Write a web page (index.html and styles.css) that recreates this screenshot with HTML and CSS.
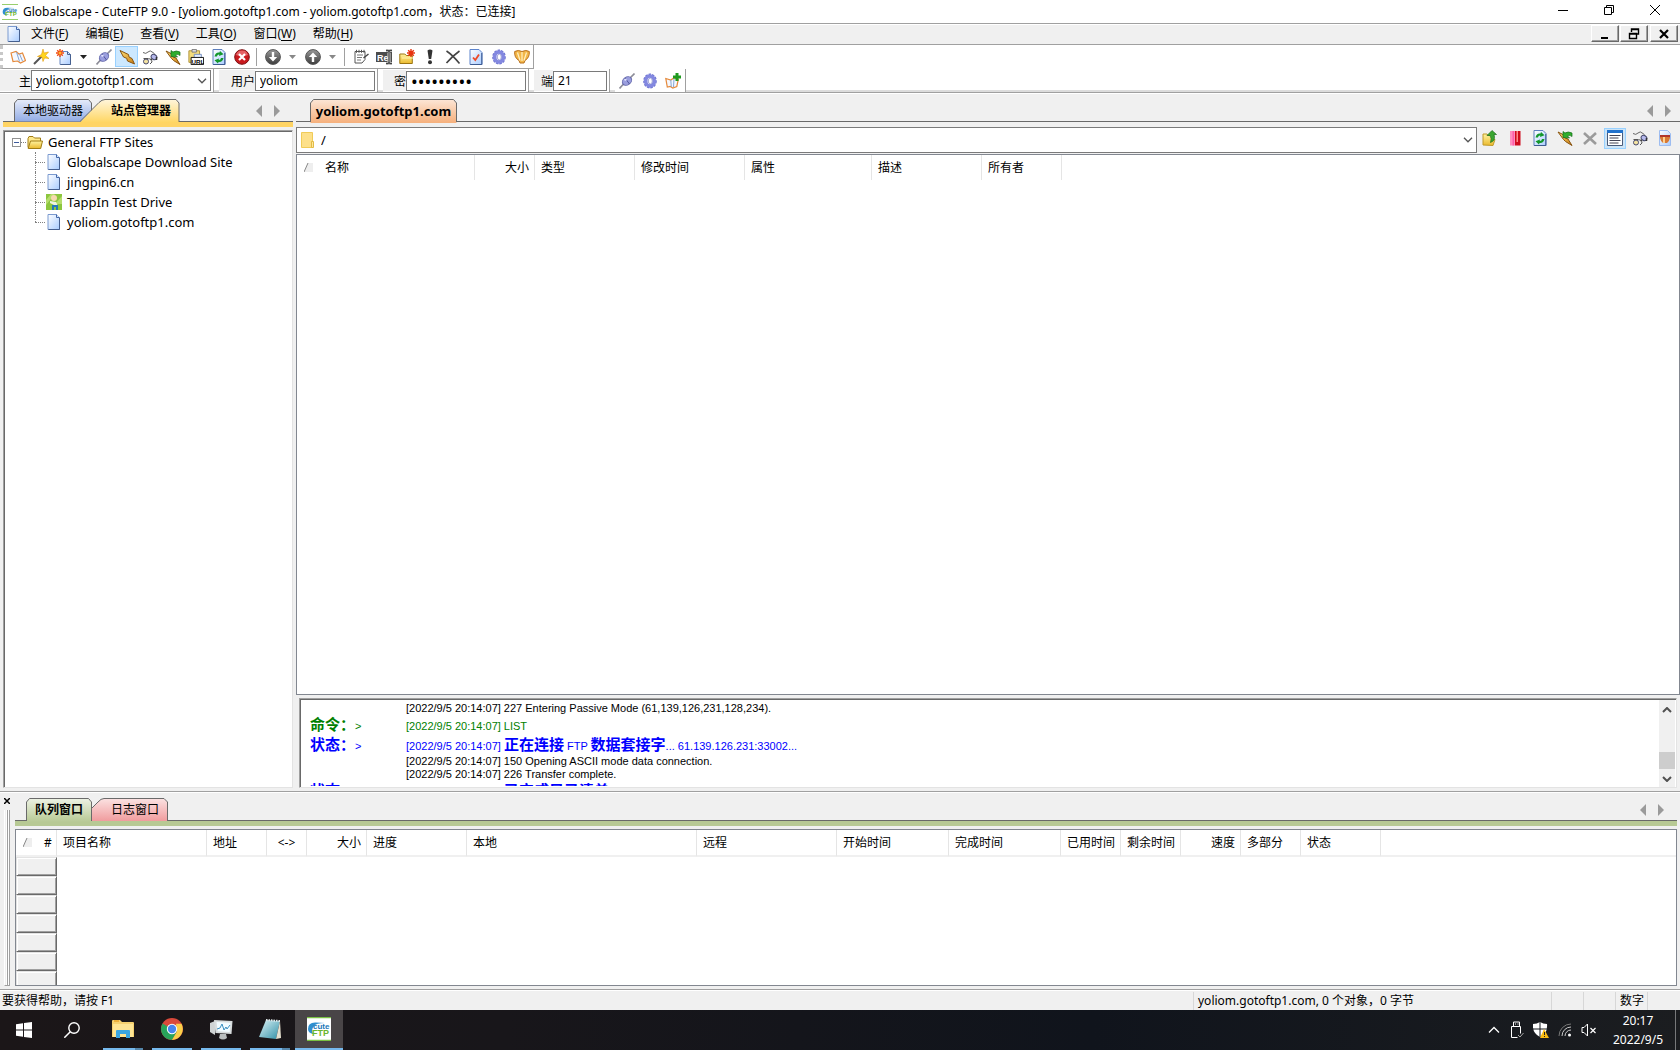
FILE: index.html
```html
<!DOCTYPE html>
<html lang="zh-CN">
<head>
<meta charset="utf-8">
<title>Globalscape - CuteFTP 9.0</title>
<link rel="stylesheet" href="styles.css">
</head>
<body>
<svg class="defs" width="0" height="0" aria-hidden="true">
  <defs>
    <linearGradient id="gDoc" x1="0" y1="0" x2="1" y2="1"><stop offset="0" stop-color="#fff"/><stop offset="1" stop-color="#a9ccff"/></linearGradient>
    <linearGradient id="gFolder" x1="0" y1="0" x2="0" y2="1"><stop offset="0" stop-color="#fff3a0"/><stop offset="1" stop-color="#eab92d"/></linearGradient>
    <linearGradient id="gBall" x1="0" y1="0" x2="0" y2="1"><stop offset="0" stop-color="#9a9a9a"/><stop offset="1" stop-color="#3c3c3c"/></linearGradient>
    <linearGradient id="gGold" x1="0" y1="0" x2="1" y2="1"><stop offset="0" stop-color="#ffe27a"/><stop offset="1" stop-color="#c87a10"/></linearGradient>
    <linearGradient id="gBlueTab" x1="0" y1="0" x2="0" y2="1"><stop offset="0" stop-color="#e6ecfa"/><stop offset="1" stop-color="#90aae4"/></linearGradient>
    <linearGradient id="gYellowTab" x1="0" y1="0" x2="0" y2="1"><stop offset="0" stop-color="#fff6dc"/><stop offset="1" stop-color="#ffd55f"/></linearGradient>
    <linearGradient id="gOrangeTab" x1="0" y1="0" x2="0" y2="1"><stop offset="0" stop-color="#fce6d6"/><stop offset="1" stop-color="#f6b07c"/></linearGradient>
    <linearGradient id="gGreenTab" x1="0" y1="0" x2="0" y2="1"><stop offset="0" stop-color="#edf2e4"/><stop offset="1" stop-color="#b7c994"/></linearGradient>
    <linearGradient id="gRedTab" x1="0" y1="0" x2="0" y2="1"><stop offset="0" stop-color="#fbe2e2"/><stop offset="1" stop-color="#f09c9e"/></linearGradient>
    <linearGradient id="gNote" x1="0" y1="0" x2="1" y2="1"><stop offset="0" stop-color="#dff5f8"/><stop offset="1" stop-color="#2f8fa6"/></linearGradient>
  </defs>
  <symbol id="doc" viewBox="0 0 16 16"><path d="M2 .5h8.500l3 3v12h-11.500z" fill="url(#gDoc)" stroke="#7b9ad0"/><path d="M10.500 .5v3h3" fill="#dceaff" stroke="#4468a8"/><path d="M13.500 4v11.500h-11" fill="none" stroke="#46608f"/></symbol>
  <symbol id="folder" viewBox="0 0 16 16"><path d="M1 13.500v-9l1-2h4l1.500 1.500h6v3" fill="#ffe98c" stroke="#a07c14"/><path d="M1.200 14.500l2.300-7.500h12l-1.800 7.500z" fill="url(#gFolder)" stroke="#a07c14"/></symbol>
  <symbol id="book" viewBox="0 0 16 16"><path d="M1 4l5-1.500 3 2.500 3.500-1 3 7.500-5 2.500-3-2-4.500.5z" fill="#f4f8ff" stroke="#e58a3c" stroke-width="1.200"/><path d="M6.500 3l3 9.500M9.500 5l3 7" stroke="#86a6d6" fill="none"/></symbol>
  <symbol id="wand" viewBox="0 0 16 16"><path d="M1 15l8-8" stroke="#555" stroke-width="2"/><path d="M10 0l1 4 4.500-1-3 3.500 3.500 3-4.500-.5-1.500 3.500-1-4.500-4.500-.5 4-2z" fill="#ffd51e" stroke="#e09a12" stroke-width=".6"/></symbol>
  <symbol id="newdoc" viewBox="0 0 16 16"><path d="M4 2.500h7.500l3 3v10h-10.500z" fill="url(#gDoc)" stroke="#6b8ac4"/><path d="M11.500 2.500v3h3v10h-10" fill="none" stroke="#46608f"/><path d="M4 0v8M0 4h8M1.200 1.200l5.600 5.600M6.800 1.200l-5.600 5.600" stroke="#f04a12" stroke-width="1.400"/><circle cx="4" cy="4" r="1.500" fill="#ffb52e"/></symbol>
  <symbol id="plug" viewBox="0 0 16 16"><path d="M.5 15.500l4.500-5M11 5l4.500-4.500" stroke="#8d8d98" stroke-width="1.600"/><ellipse cx="8" cy="8" rx="5" ry="3.800" transform="rotate(-35 8 8)" fill="#9a9ede" stroke="#6468ac"/><path d="M6 5l4.500 6" stroke="#5257a0"/><ellipse cx="6.500" cy="6.800" rx="1.300" ry="1" fill="#e2e4ff"/></symbol>
  <symbol id="bolt" viewBox="0 0 16 16"><path d="M1 1.500l8.500 4 .5 2.500 3 1.500 2.500 5.500-7-3-.8-2.700-3.200-1.300z" fill="url(#gGold)" stroke="#875310"/></symbol>
  <symbol id="plugs" viewBox="0 0 16 16"><path d="M1 3.500q3 2 5-.5t5 .5q2 1 2 3" fill="none" stroke="#666"/><ellipse cx="12" cy="8" rx="3" ry="2.400" transform="rotate(35 12 8)" fill="#b6b9ec" stroke="#45486e"/><path d="M14.500 8v3M10 10l-1.500 1" stroke="#333" stroke-width="1.500"/><circle cx="4" cy="12.500" r="2.500" fill="#f3e2a0" stroke="#45486e"/><path d="M1.500 9.500h5M6.500 10q3-1 3.500 3l-2 2" fill="none" stroke="#555"/></symbol>
  <symbol id="boltoff" viewBox="0 0 16 16"><path d="M1 2l5 2.500 2 3.500 3 1 4 6.500-6.500-4-2-2z" fill="url(#gGold)" stroke="#875310"/><path d="M6 7.500l0-6 2 1.500q3-2 7 0v3.500q-2-2-4.500-.5l2 2z" fill="#2fae2c" stroke="#146b18" stroke-width=".7"/></symbol>
  <symbol id="url" viewBox="0 0 18 18"><path d="M1 2h12v13h-12z" fill="#f4dc7c" stroke="#a98b2c"/><path d="M4.500 .5h5v3h-5z" fill="#ddd" stroke="#777"/><path d="M7 6h8v8h-8z" fill="#e3eeff" stroke="#6f8bc0"/><path d="M3.500 9.500h14v8h-14z" fill="#fff" stroke="#000"/><text x="4" y="16.500" font-size="7" font-weight="700" font-family="Liberation Sans, sans-serif">URL</text></symbol>
  <symbol id="refresh" viewBox="0 0 16 16"><path d="M2 .5h9l3 3v12h-12z" fill="url(#gDoc)" stroke="#5d7fbd"/><path d="M13.800 4v11.500h-11.500" fill="none" stroke="#3e5b90"/><path d="M3.500 7.500q1-4.500 5-4l.5-1.500 3.500 3.300-4.500 1.700.3-1.500q-2-.2-2.300 2zM12.500 9q-1 4.500-5 4l-.5 1.500-3.500-3.300 4.500-1.700-.3 1.500q2 .2 2.300-2z" fill="#13972b"/></symbol>
  <symbol id="stop" viewBox="0 0 16 16"><circle cx="8" cy="8" r="7.300" fill="#c91a1e" stroke="#7d1114"/><path d="M2 6a6.300 6.300 0 0 1 12 0q-6 2.500-12 0z" fill="#e56265"/><path d="M5 5l6 6M11 5l-6 6" stroke="#fff" stroke-width="2.200"/></symbol>
  <symbol id="down" viewBox="0 0 16 16"><circle cx="8" cy="8" r="7.400" fill="url(#gBall)" stroke="#555"/><path d="M6.800 3h2.400v5h3l-4.200 4.500-4.200-4.500h3z" fill="#fff"/></symbol>
  <symbol id="up" viewBox="0 0 16 16"><circle cx="8" cy="8" r="7.400" fill="url(#gBall)" stroke="#555"/><path d="M6.800 13h2.400v-5h3l-4.200-4.500-4.200 4.500h3z" fill="#fff"/></symbol>
  <symbol id="note" viewBox="0 0 16 16"><path d="M2 2.500h10v8l-3 3.500h-7z" fill="#fff" stroke="#555"/><path d="M3.500 .8v3M6 .8v3M8.500 .8v3M11 .8v3" stroke="#555"/><path d="M4 6h6M4 8.500h5M4 11h4" stroke="#777"/><path d="M15.500 5l-5 4" stroke="#444" stroke-width="1.500"/></symbol>
  <symbol id="rename" viewBox="0 0 16 16"><path d="M0 3h16v10h-16z" fill="#4c4c4c"/><text x="1" y="11.500" fill="#fff" font-size="9" font-weight="700" font-family="Liberation Sans, sans-serif">Re</text><path d="M10 1.500h2l1 1 1-1h2M13 2v12M10 14.500h2l1-1 1 1h2" fill="none" stroke="#ddd" stroke-width="3"/><path d="M10 1.500h2l1 1 1-1h2M13 2v12M10 14.500h2l1-1 1 1h2" fill="none" stroke="#444" stroke-width="1.300"/></symbol>
  <symbol id="newfolder" viewBox="0 0 16 16"><path d="M.8 14.500v-9.500h5l1.500 1.500h6v8z" fill="url(#gFolder)" stroke="#9b7512"/><path d="M3 9h11" stroke="#fff3b0"/><path d="M12 0v8M8 4h8M9.200 1.200l5.600 5.600M14.800 1.200l-5.600 5.600" stroke="#e8320e" stroke-width="1.400"/></symbol>
  <symbol id="bang" viewBox="0 0 16 16"><path d="M5.500 1.500q2.500-2 5 0l-1.300 8.500h-2.400z" fill="#333"/><circle cx="8" cy="13.300" r="2" fill="#333"/></symbol>
  <symbol id="cross" viewBox="0 0 16 16"><path d="M1.500 2q6 4 13 12.500M14.500 2q-7 5-13 12" fill="none" stroke="#444" stroke-width="1.600"/></symbol>
  <symbol id="crossgray" viewBox="0 0 16 16"><path d="M2 3l12 11M14 3l-12 11" stroke="#9b9b9b" stroke-width="2.600"/></symbol>
  <symbol id="check" viewBox="0 0 16 16"><path d="M2 .5h9l3 3v12h-12z" fill="url(#gDoc)" stroke="#5d84cc"/><path d="M13.800 4v11.500h-11.500" fill="none" stroke="#3e5b90"/><path d="M5 8.500l2.300 2.500 3.700-5.500" fill="none" stroke="#ee4a28" stroke-width="1.800"/></symbol>
  <symbol id="gear" viewBox="0 0 16 16"><ellipse cx="8" cy="8" rx="5.500" ry="6.200" fill="none" stroke="#6c72cf" stroke-width="2.600" stroke-dasharray="2.200 1"/><ellipse cx="8" cy="8" rx="4.300" ry="5" fill="none" stroke="#8388e0" stroke-width="3.600"/><ellipse cx="8.300" cy="8" rx="2" ry="3" fill="#fff" stroke="#666bbd" stroke-width=".6"/></symbol>
  <symbol id="shell" viewBox="0 0 16 16"><path d="M.7 2.500q3.500-2 7.300 0 4-2 7.300 0 .5 6-4.300 9l-1 2.500h-4l-1-2.500q-5-3-4.300-9z" fill="#f3b748" stroke="#b9701d"/><path d="M3.500 3.500l2.500 8M8 3v9M12.500 3.500l-2.500 8" stroke="#fff0c4" stroke-width="1.200"/></symbol>
  <symbol id="bookadd" viewBox="0 0 16 16"><path d="M.8 5.500l5 1.500 3-2 4.500 1.500-1.500 7-4 1.500-2.500-1.500-3 .5z" fill="#f4f8ff" stroke="#e58a3c" stroke-width="1.200"/><path d="M5.800 7l.5 7M9 6l-.5 8" stroke="#86a6d6"/><path d="M12 0v8M8 4h8" stroke="#1f9a1f" stroke-width="3"/></symbol>
  <symbol id="folderup" viewBox="0 0 16 16"><path d="M1 15v-11h4l1 1.500h4v4h3l-2 6z" fill="url(#gFolder)" stroke="#c09a2a"/><path d="M5 5.500l5-5 4.500 4h-2.500q2 6-3.500 8 1.500-4-.5-7z" fill="#3aa630" stroke="#1c6e1b" stroke-width=".7"/></symbol>
  <symbol id="redbook" viewBox="0 0 16 16"><path d="M3 1h4.500v14.500h-4.500z" fill="#ff8fc0"/><path d="M5.500 1h2v14.500h-2z" fill="#ff5ca8"/><path d="M8 1h5.500v14.500h-5.500z" fill="#cf0b1d"/><path d="M9.500 1h1.500v11h-1.500z" fill="#ff8a8a"/></symbol>
  <symbol id="listview" viewBox="0 0 16 16"><path d="M.5 .5h15v15h-15z" fill="#fff" stroke="#4a5a78"/><path d="M0 0h16v3h-16z" fill="#2272cc"/><path d="M2.500 5.500h11M2.500 8h9M2.500 10.500h11M2.500 13h9" stroke="#445"/></symbol>
  <symbol id="shelldoc" viewBox="0 0 16 16"><path d="M2.500 .5h8l3 3v12h-11z" fill="url(#gDoc)" stroke="#9dbcf0"/><path d="M3 5h10v3q-1 4-3 5h-4q-2-1-3-5z" fill="#d77a35"/><path d="M3 6h10" stroke="#b1362b" stroke-width="2"/><path d="M7 7v6" stroke="#ffd292" stroke-width="2"/></symbol>
  <symbol id="tappin" viewBox="0 0 16 16"><path d="M0 0h16v16h-16z" fill="#8cc63e"/><path d="M0 6l5-6h4l-9 11M16 2l-7 8h7" fill="#b5dd6c"/><circle cx="8" cy="4" r="3" fill="#f6d9b0"/><path d="M4 7l6 1 2 4-4-1-4-2z" fill="#eef3e0"/><path d="M6 16v-5h6v5h-2v-3h-2v3z" fill="#2377b9"/></symbol>
  <symbol id="cute" viewBox="0 0 24 24"><path d="M0 0h24v24h-24z" fill="#fff"/><path d="M0 .5h24M0 23.500h24" stroke="#7ac143" stroke-width="1.400"/><path d="M1 12q0-7 8-6.500l9 .5q-9 0-11 3-3 3-1 8-5-1-5-5z" fill="#2f8fd0"/><text x="6" y="12" fill="#1b77b8" font-size="8" font-weight="700" font-family="Liberation Sans, sans-serif">cute</text><text x="5" y="18.500" fill="#6cb52d" font-size="9" font-weight="700" font-family="Liberation Sans, sans-serif">FTP</text></symbol>
  <symbol id="drop" viewBox="0 0 8 4"><path d="M0 0h7l-3.500 4z" fill="currentColor"/></symbol>
  <symbol id="chev" viewBox="0 0 10 6"><path d="M1 .8l4 4 4-4" fill="none" stroke="#555" stroke-width="1.300"/></symbol>
  <symbol id="tril" viewBox="0 0 6 12"><path d="M6 0v12l-6-6z" fill="#9a9a9a"/></symbol>
  <symbol id="trir" viewBox="0 0 6 12"><path d="M0 0v12l6-6z" fill="#9a9a9a"/></symbol>
  <symbol id="sort" viewBox="0 0 9 9"><path d="M4 0h5v9h-9z" fill="#eee"/><path d="M0 9l4-9" stroke="#888"/></symbol>
</svg>

<header class="titlebar">
  <svg class="i16 appicon"><use href="#cute"/></svg>
  <h1>Globalscape - CuteFTP 9.0 - [yoliom.gotoftp1.com - yoliom.gotoftp1.com，状态：已连接]</h1>
  <button class="win" aria-label="最小化"><svg width="10" height="10"><path d="M0 5.500h10" stroke="#000"/></svg></button>
  <button class="win" aria-label="还原"><svg width="10" height="10"><path d="M.5 2.500h7v7h-7zM2.500 2.500v-2h7v7h-2" fill="none" stroke="#000"/></svg></button>
  <button class="win" aria-label="关闭"><svg width="10" height="10"><path d="M0 0l10 10M10 0l-10 10" stroke="#000"/></svg></button>
</header>

<nav class="menubar">
  <svg class="i16"><use href="#doc"/></svg>
  <div class="menus">
    <button>文件(<u>F</u>)</button><button>编辑(<u>E</u>)</button><button>查看(<u>V</u>)</button><button>工具(<u>O</u>)</button><button>窗口(<u>W</u>)</button><button>帮助(<u>H</u>)</button>
  </div>
  <div class="mdi">
    <button aria-label="最小化文档"><svg width="12" height="12"><path d="M2 10h7" stroke="#000" stroke-width="2"/></svg></button>
    <button aria-label="还原文档"><svg width="12" height="12"><path d="M3.500 4v-3h7v5h-2M3 1.500h8M1.500 5.500h7v5h-7zM1 6h8" fill="none" stroke="#000" stroke-width="1.400"/></svg></button>
    <button aria-label="关闭文档"><svg width="12" height="12"><path d="M2 2l8 8M10 2l-8 8" stroke="#000" stroke-width="2.200"/></svg></button>
  </div>
</nav>

<div class="toolbar">
  <div class="tools">
    <button aria-label="站点管理器"><svg class="i16"><use href="#book"/></svg></button>
    <button aria-label="连接向导"><svg class="i16"><use href="#wand"/></svg></button>
    <button aria-label="新建"><svg class="i16"><use href="#newdoc"/></svg></button>
    <button class="dd dark" aria-label="新建选项"><svg><use href="#drop"/></svg></button>
    <button aria-label="连接"><svg class="i16"><use href="#plug"/></svg></button>
    <button class="on" aria-label="快速连接"><svg class="i16"><use href="#bolt"/></svg></button>
    <button aria-label="重新连接"><svg class="i16"><use href="#plugs"/></svg></button>
    <button aria-label="断开"><svg class="i16"><use href="#boltoff"/></svg></button>
    <button aria-label="粘贴 URL"><svg class="i16"><use href="#url"/></svg></button>
    <button aria-label="刷新"><svg class="i16"><use href="#refresh"/></svg></button>
    <button aria-label="停止"><svg class="i16"><use href="#stop"/></svg></button>
    <i class="sep"></i>
    <button aria-label="下载"><svg class="i16"><use href="#down"/></svg></button>
    <button class="dd" aria-label="下载选项"><svg><use href="#drop"/></svg></button>
    <button aria-label="上传"><svg class="i16"><use href="#up"/></svg></button>
    <button class="dd" aria-label="上传选项"><svg><use href="#drop"/></svg></button>
    <i class="sep"></i>
    <button aria-label="编辑"><svg class="i16"><use href="#note"/></svg></button>
    <button aria-label="重命名"><svg class="i16"><use href="#rename"/></svg></button>
    <button aria-label="新建文件夹"><svg class="i16"><use href="#newfolder"/></svg></button>
    <button aria-label="执行"><svg class="i16"><use href="#bang"/></svg></button>
    <button aria-label="删除"><svg class="i16"><use href="#cross"/></svg></button>
    <button aria-label="属性"><svg class="i16"><use href="#check"/></svg></button>
    <button aria-label="设置"><svg class="i16"><use href="#gear"/></svg></button>
    <button aria-label="帮助"><svg class="i16"><use href="#shell"/></svg></button>
  </div>
</div>

<form class="connect">
  <div class="group"><label class="w-host" for="host">主</label><span class="combo host"><select id="host"><option>yoliom.gotoftp1.com</option></select><svg><use href="#chev"/></svg></span></div>
  <div class="group"><label class="w-user" for="user">用户</label><input id="user" class="wide" value="yoliom"></div>
  <div class="group"><label class="w-pass" for="pass">密</label><input id="pass" class="wide" type="password" value="•••••••••"></div>
  <div class="group"><label class="w-port" for="port">端</label><input id="port" class="narrow" value="21"></div>
  <div class="group last">
    <button type="button" aria-label="连接"><svg class="i16"><use href="#plug"/></svg></button>
    <button type="button" aria-label="设置"><svg class="i16"><use href="#gear"/></svg></button>
    <button type="button" aria-label="添加到站点管理器"><svg class="i16"><use href="#bookadd"/></svg></button>
  </div>
</form>

<main class="work">
  <aside class="sites">
    <div class="tabs yellow">
      <button class="tab t-local"><svg width="78" height="23"><path d="M.5 23v-19l3-3.500h71l3 3.500v19z" fill="url(#gBlueTab)" stroke="#6a6a6a"/></svg><span>本地驱动器</span></button>
      <button class="tab t-site"><svg width="100" height="24"><path d="M0 23.500l19-20q3-3 6-3h71l3 3.500v20z" fill="url(#gYellowTab)"/><path d="M0 22.500l19-19q3-3 6-3h71l3 3.500v19" fill="none" stroke="#6a6a6a"/></svg><b>站点管理器</b></button>
      <span class="scrollers"><button aria-label="向左"><svg><use href="#tril"/></svg></button><button aria-label="向右"><svg><use href="#trir"/></svg></button></span>
    </div>
    <div class="treebox">
      <div class="root"><i class="minus"></i><i class="dots"></i><svg class="i16"><use href="#folder"/></svg><span>General FTP Sites</span></div>
      <ul class="tree">
        <li><svg class="i16"><use href="#doc"/></svg><span>Globalscape Download Site</span></li>
        <li><svg class="i16"><use href="#doc"/></svg><span>jingpin6.cn</span></li>
        <li><svg class="i16"><use href="#tappin"/></svg><span>TappIn Test Drive</span></li>
        <li><svg class="i16"><use href="#doc"/></svg><span>yoliom.gotoftp1.com</span></li>
      </ul>
    </div>
  </aside>

  <section class="remote">
    <div class="tabs plain">
      <button class="tab t-remote"><svg width="147" height="24"><path d="M.5 24v-20l3-3.500h140l3 3.500v20z" fill="url(#gOrangeTab)"/><path d="M.5 23v-19l3-3.500h140l3 3.500v19" fill="none" stroke="#6a6a6a"/></svg><b>yoliom.gotoftp1.com</b></button>
      <span class="scrollers"><button aria-label="向左"><svg><use href="#tril"/></svg></button><button aria-label="向右"><svg><use href="#trir"/></svg></button></span>
    </div>
    <div class="pathrow">
      <span class="combo path"><svg class="pf" viewBox="0 0 14 17"><path d="M.5 .5h11v15h-11z" fill="#fde08a" stroke="#f0cb58"/><path d="M10.500 9.500h2v6h-2z" fill="#ffe99c" stroke="#e3bb45"/></svg><select aria-label="远程路径"><option>/</option></select><svg><use href="#chev"/></svg></span>
      <div class="ptools">
        <button aria-label="上级目录"><svg class="i16"><use href="#folderup"/></svg></button>
        <button aria-label="书签"><svg class="i16"><use href="#redbook"/></svg></button>
        <button aria-label="刷新"><svg class="i16"><use href="#refresh"/></svg></button>
        <button aria-label="断开"><svg class="i16"><use href="#boltoff"/></svg></button>
        <button aria-label="取消"><svg class="i16"><use href="#crossgray"/></svg></button>
        <button class="on" aria-label="显示日志"><svg class="i16"><use href="#listview"/></svg></button>
        <button aria-label="重新连接"><svg class="i16"><use href="#plugs"/></svg></button>
        <button aria-label="属性"><svg class="i16"><use href="#shelldoc"/></svg></button>
      </div>
    </div>
    <div class="files">
      <table>
        <colgroup><col class="c178"><col class="c60"><col class="c100"><col class="c110"><col class="c127"><col class="c110"><col class="c80"><col></colgroup>
        <thead><tr><th><svg class="sort"><use href="#sort"/></svg>名称</th><th class="r">大小</th><th>类型</th><th>修改时间</th><th>属性</th><th>描述</th><th>所有者</th><th class="end"></th></tr></thead>
      </table>
    </div>
    <div class="log">
      <div class="lines">
        <p><span></span>[2022/9/5 20:14:07] 227 Entering Passive Mode (61,139,126,231,128,234).</p>
        <p class="cmd"><span><b>命令：</b>&gt;</span>[2022/9/5 20:14:07] LIST</p>
        <p class="stat"><span><b>状态：</b>&gt;</span>[2022/9/5 20:14:07] <b>正在连接</b> FTP <b>数据套接字</b>... 61.139.126.231:33002...</p>
        <p><span></span>[2022/9/5 20:14:07] 150 Opening ASCII mode data connection.</p>
        <p><span></span>[2022/9/5 20:14:07] 226 Transfer complete.</p>
        <p class="stat"><span><b>状态：</b>&gt;</span>[2022/9/5 20:14:07] <b>已完成目录清单</b></p>
      </div>
      <div class="vscroll"><svg class="flip" viewBox="0 0 10 6"><path d="M1 1l4 4 4-4" fill="none" stroke="#505050" stroke-width="2"/></svg><i class="thumb"></i><svg viewBox="0 0 10 6"><path d="M1 1l4 4 4-4" fill="none" stroke="#505050" stroke-width="2"/></svg></div>
    </div>
  </section>
</main>

<section class="dock">
  <div class="grip"><button aria-label="关闭窗格"><svg width="6" height="6"><path d="M0 0l6 6M6 0l-6 6" stroke="#000" stroke-width="1.500"/></svg></button><i></i></div>
  <div class="dockbody">
    <div class="tabs green">
      <button class="tab t-queue"><svg width="66" height="24"><path d="M.5 24v-20l3-3.500h59l3 3.500v20z" fill="url(#gGreenTab)"/><path d="M.5 23v-19l3-3.500h59l3 3.500v19" fill="none" stroke="#6a6a6a"/></svg><b>队列窗口</b></button>
      <button class="tab t-logs"><svg width="76" height="23"><path d="M0 23v-13l6-6q3-3.500 6-3.500h60l3.500 3.500v19z" fill="url(#gRedTab)"/><path d="M0 10l6-6q3-3.500 6-3.500h60l3.500 3.500v19" fill="none" stroke="#6a6a6a"/></svg><span>日志窗口</span></button>
      <span class="scrollers"><button aria-label="向左"><svg><use href="#tril"/></svg></button><button aria-label="向右"><svg><use href="#trir"/></svg></button></span>
    </div>
    <div class="queue">
      <table>
        <colgroup><col class="c41"><col class="c150"><col class="c60"><col class="c40"><col class="c60"><col class="c100"><col class="c230"><col class="c140"><col class="c112"><col class="c112"><col class="c60"><col class="c60"><col class="c60"><col class="c60"><col class="c80"><col></colgroup>
        <thead><tr><th class="num"><svg class="sort"><use href="#sort"/></svg>#</th><th>项目名称</th><th>地址</th><th class="dir">&lt;-&gt;</th><th class="r">大小</th><th>进度</th><th>本地</th><th>远程</th><th>开始时间</th><th>完成时间</th><th>已用时间</th><th>剩余时间</th><th class="r">速度</th><th>多部分</th><th>状态</th><th class="end"></th></tr></thead>
        <tbody><tr><td></td></tr><tr><td></td></tr><tr><td></td></tr><tr><td></td></tr><tr><td></td></tr><tr><td></td></tr><tr><td></td></tr></tbody>
      </table>
    </div>
  </div>
</section>

<footer class="status"><span class="msg">要获得帮助，请按 F1</span><span class="conn">yoliom.gotoftp1.com, 0 个对象，0 字节</span><span class="cell"></span><span class="cell"></span><span class="cell">数字</span><span class="cell"></span></footer>

<div class="taskbar">
  <button class="tb" aria-label="开始"><svg width="16" height="16"><path d="M0 2.200l7-1v6.300h-7zM8 1l8-1v7.500h-8zM0 8.500h7v6.300l-7-1zM8 8.500h8v7.500l-8-1z" fill="#fff"/></svg></button>
  <button class="tb" aria-label="搜索"><svg width="16" height="16"><circle cx="10" cy="6" r="5.200" fill="none" stroke="#fff" stroke-width="1.400"/><path d="M6.300 9.700l-6 6" stroke="#fff" stroke-width="1.500"/></svg></button>
  <button class="tb run multi" aria-label="文件资源管理器"><svg width="22" height="20"><path d="M0 2q0-1 1-1h7l2 2h11q1 0 1 1v14h-22z" fill="#f6d170"/><path d="M1 5h20v13h-20z" fill="#ffe594"/><path d="M2 2h5" stroke="#e9a52d" stroke-width="1.500"/><path d="M4 19v-7q0-1 1-1h12q1 0 1 1v7h-4v-4h-6v4z" fill="#3ba6e2"/></svg></button>
  <button class="tb run" aria-label="Chrome"><svg width="22" height="22" viewBox="0 0 22 22"><circle cx="11" cy="11" r="11" fill="#d9493b"/><path d="M1.500 5.500a11 11 0 0 0 9.500 16.500l5-8.500-5-2.500z" fill="#28a45a"/><path d="M20.500 5.800a11 11 0 0 1-9.500 16.200l5-8.500-1-7.700z" fill="#f9cf4a"/><circle cx="11" cy="11" r="5.200" fill="#fff"/><circle cx="11" cy="11" r="4.200" fill="#4785ee"/></svg></button>
  <button class="tb run" aria-label="监视器"><svg width="23" height="21" viewBox="0 0 23 21"><path d="M0 4l5-2v14l-5-3z" fill="#cfd3d4"/><path d="M4 1l18.500 1-1 13-16-1z" fill="#d8dcdd"/><path d="M6.500 3l14 .7-.8 9.300-12-.8z" fill="#f2fbff"/><path d="M7 10l3-1 2-4 2 6 2-3 1 2 3-4" fill="none" stroke="#3a8fc0"/><path d="M10 15h6l1 4q-4 3-8 0z" fill="#b9bdbe"/></svg></button>
  <button class="tb run multi" aria-label="记事本"><svg width="22" height="21" viewBox="0 0 22 21"><path d="M7 1l14 1-4 18-17-2z" fill="url(#gNote)"/><path d="M21 2l1 17-5 1z" fill="#e4e0cf"/><path d="M7 1l14 1" stroke="#dfe9ea" stroke-width="2" stroke-dasharray="1.500 1"/></svg></button>
  <button class="tb run active" aria-label="CuteFTP"><svg width="24" height="24"><use href="#cute"/></svg></button>
  <div class="tray">
    <svg width="14" height="16"><path d="M2 10.500l5-5 5 5" fill="none" stroke="#fff" stroke-width="1.300"/></svg>
    <svg width="14" height="18"><path d="M3.500 5.500v-4.500h6v4.500M1.500 5.500h9v7M1.500 5.500v11h6" fill="none" stroke="#fff"/><path d="M5 3h1M7.500 3h1" stroke="#fff"/><path d="M8 14l2 2 3.500-4" fill="none" stroke="#aaa"/></svg>
    <svg width="16" height="17"><path d="M7 0q3 2 7 2 1 9-7 13-8-4-7-13 4 0 7-2z" fill="#fff"/><path d="M7 0v15M0 7h14" stroke="#15181e"/><path d="M11 7l5 9h-9z" fill="#fbbc12"/><path d="M11.500 10v3M11.500 14v1" stroke="#222"/></svg>
    <svg width="14" height="14"><path d="M1 13a12 12 0 0 1 12-12" fill="none" stroke="#777"/><path d="M4 13a9 9 0 0 1 9-9M7 13a6 6 0 0 1 6-6" fill="none" stroke="#ccc"/><circle cx="11.500" cy="12" r="1.500" fill="#fff"/></svg>
    <svg width="16" height="14"><path d="M1 4.500h2l3.500-3.500v12l-3.500-3.500h-2z" fill="none" stroke="#fff"/><path d="M9.500 5l5 5M14.500 5l-5 5" stroke="#fff" stroke-width="1.200"/></svg>
  </div>
  <div class="clock"><time>20:17</time><time>2022/9/5</time></div>
  <button class="desk" aria-label="显示桌面"></button>
</div>
</body>
</html>
```
FILE: styles.css
```css
* { box-sizing: border-box; }
html, body { height: 100%; }
body {
  margin: 0;
  display: flex;
  flex-direction: column;
  background: #f0f0f0;
  color: #000;
  font: 12px/16px "Noto Sans", "Noto Sans CJK SC", sans-serif;
  overflow: hidden;
  white-space: nowrap;
}
button, input, select { font: inherit; color: inherit; margin: 0; padding: 0; border: 0; background: none; border-radius: 0; }
button { display: flex; align-items: center; justify-content: center; flex: none; }
svg { display: block; flex: none; }
.defs { position: absolute; }
.i16 { width: 16px; height: 16px; }

.titlebar { flex: none; height: 24px; display: flex; align-items: center; background: #fff; border-bottom: 1px solid #a0a0a0; padding: 0 2px; }
.titlebar h1 { margin: 0 0 0 5px; flex: 1; font-size: 12px; font-weight: 400; }
.win { width: 46px; height: 20px; align-self: flex-start; }

.menubar { flex: none; height: 21px; display: flex; align-items: center; border-top: 1px solid #fff; border-bottom: 1px solid #a0a0a0; padding: 0 2px 2px 6px; }
.menus { display: flex; flex: 1; gap: 1px; }
.menus button { padding: 0 8px; }
.menus u { text-underline-offset: 2px; }
.menubar > .i16 { margin-right: 1px; }
.mdi { display: flex; gap: 1px; }
.mdi button { width: 28px; height: 17px; background: #f0f0f0; border: 1px solid; border-color: #fff #696969 #696969 #fff; box-shadow: inset -1px -1px #a0a0a0; }
.mdi button:last-child { margin-left: 1px; }

.toolbar { flex: none; height: 24px; display: flex; background: #fff; }
.tools { display: flex; align-items: center; height: 24px; padding-left: 3px; border-left: 3px dotted #c8c8c8; border-right: 1px solid #a0a0a0; border-bottom: 1px solid #a0a0a0; }
.tools button { width: 23px; height: 21px; }
.tools .dd { width: 17px; color: #888; }
.tools .dark { color: #222; }
.dd svg { width: 8px; height: 4px; }
.tools .on, .ptools .on { background: #cce8ff; border: 1px solid #99d1ff; }
.sep { width: 8px; height: 18px; border-left: 1px solid #a0a0a0; margin-left: 3px; margin-right: -3px; }

.connect { flex: none; height: 24px; margin: 0; display: flex; align-items: flex-start; background: #fff; border-bottom: 1px solid #a0a0a0; box-shadow: inset 0 -2px #dcdcdc; }
.group { display: flex; align-items: center; height: 23px; border-right: 1px solid #a0a0a0; padding-right: 2px; margin-right: 5px; background: #fff; }
.group label { background: #f0f0f0; text-align: right; height: 21px; line-height: 24px; overflow: hidden; }
.w-host { width: 31px; }
.w-user { width: 36px; }
.w-pass { width: 23px; }
.w-port { width: 19px; }
.group input { height: 20px; border: 1px solid #7a7a7a; padding: 0 4px; background: #fff; }
.group .wide { width: 120px; }
.group input[type="password"] { font-size: 18px; }
.group .narrow { width: 54px; }
.combo { display: flex; align-items: center; border: 1px solid #7a7a7a; background: #fff; }
.combo select { appearance: none; flex: 1; min-width: 0; outline: 0; }
.combo svg:last-child { width: 10px; height: 6px; margin-right: 3px; }
.host { width: 180px; height: 21px; padding-left: 4px; }
.last { padding: 0 1px 0 0; }
.last button { width: 23px; height: 22px; }

.work { flex: 1; min-height: 0; display: flex; padding: 5px 0 3px 3px; border-top: 1px solid #fff; border-bottom: 1px solid #a0a0a0; }
.sites { width: 290px; flex: none; display: flex; flex-direction: column; margin-right: 3px; }
.tabs { flex: none; display: flex; height: 23px; position: relative; box-shadow: inset 0 -1px #696969; }
.tab { position: relative; height: 23px; }
.tab svg { position: absolute; left: 0; top: 0; }
.tab span, .tab b { position: relative; }
.tabs.yellow { height: 28px; border-bottom: 5px solid #ffd464; padding-left: 11px; }
.t-local { width: 78px; }
.t-site { width: 100px; margin-left: -12px; padding-left: 31px; justify-content: flex-start; }
.scrollers { margin-left: auto; display: flex; align-items: center; gap: 12px; padding-right: 13px; }
.plain .scrollers { padding-right: 9px; }
.scrollers svg { width: 6px; height: 12px; }
.treebox { flex: 1; background: #fff; margin-top: 3px; border: 1px solid #a0a0a0; border-right-color: #e3e3e3; border-bottom-color: #e3e3e3; box-shadow: inset 1px 1px #696969; font-size: 13px; }
.root { display: flex; align-items: center; height: 20px; margin-top: 1px; padding-left: 8px; }
.root span, .tree span { padding-left: 5px; }
.root .i16 { margin-left: 1px; }
.minus { width: 9px; height: 9px; border: 1px solid #919191; background: linear-gradient(#3c5a9c, #3c5a9c) center / 5px 1px no-repeat #fff; }
.dots { width: 5px; border-top: 1px dotted #808080; }
.tree { list-style: none; margin: 0; padding: 0 0 0 31px; }
.tree li { position: relative; display: flex; align-items: center; height: 20px; padding-left: 11px; }
.tree li::before { content: ""; position: absolute; left: 0; top: 0; bottom: 0; border-left: 1px dotted #808080; }
.tree li:last-child::before { bottom: 50%; }
.tree li::after { content: ""; position: absolute; left: 0; top: 10px; width: 10px; border-top: 1px dotted #808080; }

.remote { flex: 1; min-width: 0; display: flex; flex-direction: column; }
.tabs.plain { padding-left: 14px; }
.t-remote { width: 147px; font-size: 13px; }
.pathrow { display: flex; align-items: center; margin-top: 5px; height: 26px; flex: none; }
.path { flex: 1; height: 26px; padding-left: 4px; font-size: 13px; }
.path .pf { width: 14px; height: 17px; margin-right: 6px; }
.ptools { display: flex; align-items: center; height: 22px; align-self: flex-start; padding-right: 3px; }
.ptools button { width: 25px; height: 22px; }
.ptools .on { width: 22px; height: 21px; background: #cce4f7; margin: 0 1px 0 2px; }
.files { flex: 1; min-height: 0; background: #fff; border: 1px solid #828790; margin-top: 1px; }
table { width: 100%; table-layout: fixed; border-collapse: separate; border-spacing: 0; }
th { height: 25px; padding: 0 5px 0 6px; font-weight: 400; text-align: left; border-right: 1px solid #e5e5e5; overflow: hidden; }
th.r { text-align: right; }
th.end { border-right: 0; }
.sort { width: 9px; height: 9px; display: inline-block; margin: 0 12px 0 1px; }
.c40 { width: 40px; } .c41 { width: 41px; } .c60 { width: 60px; } .c80 { width: 80px; } .c100 { width: 100px; }
.c110 { width: 110px; } .c112 { width: 112px; } .c127 { width: 127px; } .c140 { width: 140px; } .c150 { width: 150px; }
.c178 { width: 178px; } .c230 { width: 230px; }

.log { flex: none; height: 90px; margin: 3px 3px 0 3px; display: flex; background: #fff; border: 1px solid #a0a0a0; border-right-color: #e3e3e3; border-bottom-color: #e3e3e3; box-shadow: inset 1px 1px #696969; font-family: "Liberation Sans", "Noto Sans CJK SC", sans-serif; font-size: 11px; }
.lines { flex: 1; overflow: hidden; padding: 3px 0 0 10px; margin-bottom: 1px; }
.lines p { margin: 0; height: 13px; line-height: 13px; }
.lines p > span { display: inline-block; width: 96px; }
.lines .cmd, .lines .stat { height: 20px; line-height: 20px; }
.lines b { font-size: 15px; }
.cmd { color: #008000; }
.stat { color: #00f; }
.vscroll { width: 16px; background: #f0f0f0; display: flex; flex-direction: column; align-items: center; padding: 7px 0 5px; margin: 1px 1px 0 0; }
.vscroll svg { width: 10px; height: 6px; }
.flip { transform: rotate(180deg); }
.thumb { width: 16px; height: 17px; background: #cdcdcd; margin: auto 0 7px; }

.dock { flex: none; height: 198px; display: flex; border-top: 1px solid #fff; border-bottom: 1px solid #a0a0a0; padding: 5px 3px 3px 4px; }
.grip { width: 11px; display: flex; flex-direction: column; }
.grip button { width: 6px; height: 6px; margin-bottom: 6px; }
.grip i { flex: 1; width: 6px; border: 1px solid #a0a0a0; border-top: 0; border-left-color: #fff; background: linear-gradient(90deg, #fff 1px, #a0a0a0 1px, #a0a0a0 2px, #fff 2px) 1px 0 / 3px no-repeat; }
.dockbody { flex: 1; min-width: 0; display: flex; flex-direction: column; }
.tabs.green { height: 28px; border-bottom: 5px solid #b7c994; padding-left: 11px; }
.t-queue { width: 66px; }
.t-logs { width: 76px; padding-left: 10px; }
.queue { flex: 1; min-height: 0; overflow: hidden; margin-top: 3px; background: #fff; border: 1px solid #828790; }
.queue thead th { height: 27px; border-bottom: 2px solid #f0f0f0; }
.queue .dir { text-align: center; padding: 0; }
.queue td { height: 19px; padding: 0; background: #f0f0f0; border: 1px solid; border-color: #e3e3e3 #696969 #696969 #e3e3e3; box-shadow: inset 1px 1px #fff, inset -1px -1px #a0a0a0; }

.status { flex: none; height: 20px; display: flex; align-items: center; border-top: 1px solid #fff; padding: 1px 1px 0 2px; }
.msg { flex: 1; }
.conn { width: 358px; }
.conn, .cell { height: 18px; line-height: 18px; border-left: 1px solid #d7d7d7; padding-left: 4px; }
.cell { width: 32px; }

.taskbar { flex: none; height: 40px; display: flex; background: linear-gradient(90deg, #1b1618, #18161a 30%, #10141c 65%, #1b1d20); color: #fff; }
.tb { width: 48px; height: 40px; }
.tb.run { width: 40px; margin-left: 9px; border-bottom: 2px solid #76b9ed; }
.tb.run:nth-child(3) { margin-left: 7px; }
.tb.multi { border-image: linear-gradient(90deg, #76b9ed 31px, #5486ab 31px) 2; border-width: 0 0 2px; border-style: solid; }
.tb.active { width: 48px; margin-left: 5px; background: #494547; }
.tray { margin-left: auto; display: flex; align-items: center; gap: 9px; padding-right: 11px; }
.clock { width: 60px; display: flex; flex-direction: column; align-items: center; justify-content: center; line-height: 19px; margin-right: 7px; }
.desk { width: 5px; border-left: 1px solid #77787a; }
```
